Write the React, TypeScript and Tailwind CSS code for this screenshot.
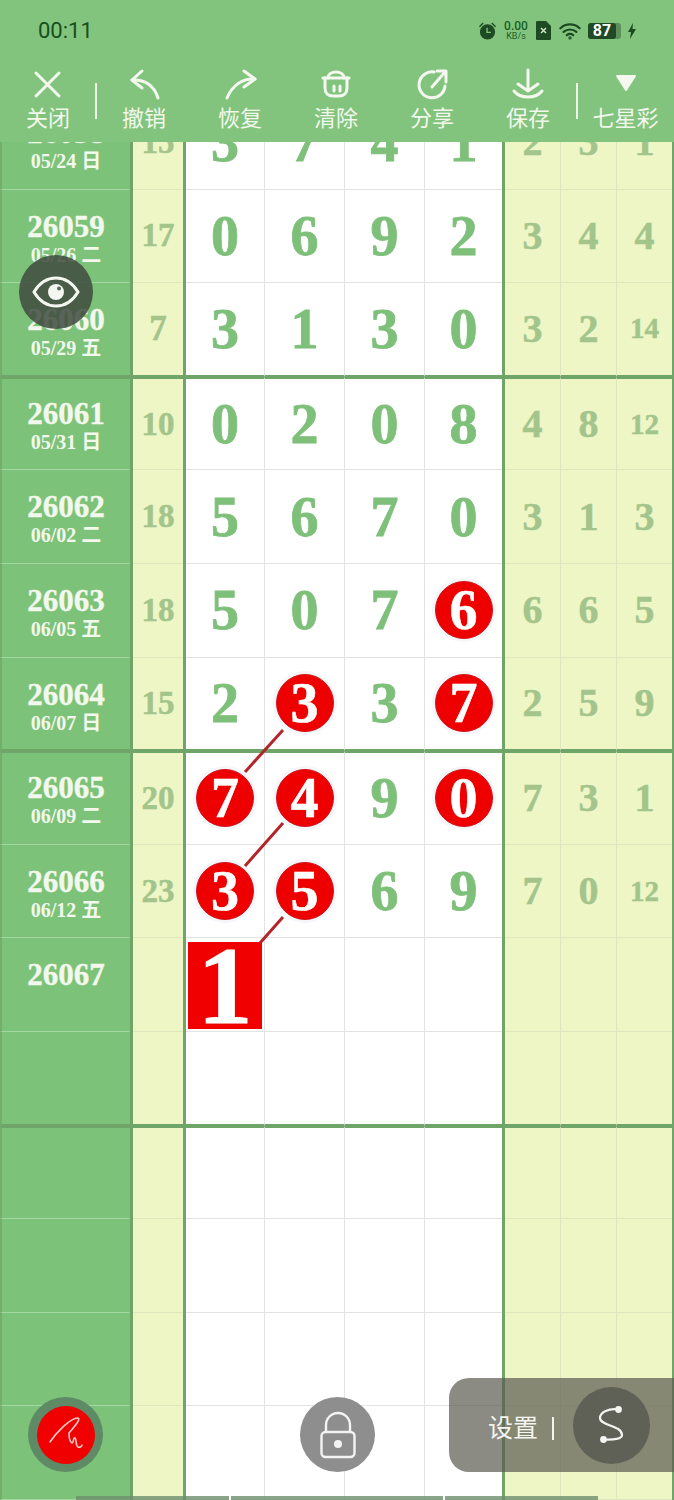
const FONT_SERIF = "font-['Liberation_Serif','Noto_Sans_CJK_SC',serif]";

type Row = {
  id?: string;
  date?: string;
  sum?: string;
  nums?: string[];
  hits?: number[];
  extra?: string[];
  thick?: boolean;
};

const rows: Row[] = [
  { id: '26058', date: '05/24 日', sum: '15', nums: ['3', '7', '4', '1'], extra: ['2', '3', '1'] },
  { id: '26059', date: '05/26 二', sum: '17', nums: ['0', '6', '9', '2'], extra: ['3', '4', '4'] },
  { id: '26060', date: '05/29 五', sum: '7', nums: ['3', '1', '3', '0'], extra: ['3', '2', '14'], thick: true },
  { id: '26061', date: '05/31 日', sum: '10', nums: ['0', '2', '0', '8'], extra: ['4', '8', '12'] },
  { id: '26062', date: '06/02 二', sum: '18', nums: ['5', '6', '7', '0'], extra: ['3', '1', '3'] },
  { id: '26063', date: '06/05 五', sum: '18', nums: ['5', '0', '7', '6'], hits: [3], extra: ['6', '6', '5'] },
  { id: '26064', date: '06/07 日', sum: '15', nums: ['2', '3', '3', '7'], hits: [1, 3], extra: ['2', '5', '9'], thick: true },
  { id: '26065', date: '06/09 二', sum: '20', nums: ['7', '4', '9', '0'], hits: [0, 1, 3], extra: ['7', '3', '1'] },
  { id: '26066', date: '06/12 五', sum: '23', nums: ['3', '5', '6', '9'], hits: [0, 1], extra: ['7', '0', '12'] },
  { id: '26067' },
  { thick: true },
  {},
  {},
  {},
  {},
];

const tools = [
  {
    label: '关闭',
    icon: <path d="M6 7l23 23M29 7L6 30" />,
  },
  {
    label: '撤销',
    icon: (
      <>
        <path d="M6 14L16 5M6 14l10 8" />
        <path d="M6 14c12-1 22 5 26 18" />
      </>
    ),
  },
  {
    label: '恢复',
    icon: (
      <>
        <path d="M33 13L22 5M33 13l-11 8" />
        <path d="M33 13C20 12 10 20 5 32" />
      </>
    ),
  },
  {
    label: '清除',
    icon: (
      <>
        <path d="M10 12c0-8 16-8 16 0" />
        <path d="M5 12h26" />
        <path d="M7 12v10c0 5 3 8 8 8h6c5 0 8-3 8-8V12" />
        <path d="M16 20v5M22 20v5" />
      </>
    ),
  },
  {
    label: '分享',
    icon: (
      <>
        <path d="M20 6A13 13 0 1 0 31 20" />
        <path d="M18 21L31 6M23 5h9v11" />
      </>
    ),
  },
  {
    label: '保存',
    icon: (
      <>
        <path d="M18 4v20M8 18l10 7 10-7" />
        <path d="M4 25c6 8 22 8 28 0" />
      </>
    ),
  },
];

function ToolIcon({ children }: { children: React.ReactNode }) {
  return (
    <svg viewBox="0 0 36 36" className="h-9 w-9" fill="none" stroke="#f4f8ef" strokeWidth={3} strokeLinecap="round" strokeLinejoin="round">
      {children}
    </svg>
  );
}

function StatusIcons() {
  return (
    <div className="flex items-center text-[#1b5f26]">
      <svg viewBox="0 0 20 20" className="h-[20px] w-[19px]" fill="#1d4a23">
        <circle cx="10" cy="11" r="8" />
        <path d="M1 5l4-4 1 1-4 4zM19 5l-4-4-1 1 4 4z" />
        <path d="M9.500 6.500v5h4" fill="none" stroke="#82c47d" strokeWidth="1.4" />
      </svg>
      <div className="ml-[7px] flex w-[24px] flex-col items-center font-['Roboto',sans-serif] leading-none">
        <span className="text-[12px] font-medium leading-[11px]">0.00</span>
        <span className="text-[9px] leading-[9px]">KB/s</span>
      </div>
      <svg viewBox="0 0 15 19" className="ml-[8px] h-[19px] w-[15px]">
        <path d="M1 0h9l5 5v13a1 1 0 0 1-1 1H1a1 1 0 0 1-1-1V1a1 1 0 0 1 1-1z" fill="#1d4a23" />
        <path d="M5 7l5 5M10 7l-5 5" stroke="#cfe3c8" strokeWidth="1.5" />
      </svg>
      <svg viewBox="0 0 24 18" className="ml-[8px] h-[18px] w-[22px]" fill="none" stroke="#1d4a23" strokeWidth="2.4" strokeLinecap="round">
        <path d="M1.500 6c6-5.500 15-5.500 21 0" />
        <path d="M5 10c4-3.500 10-3.500 14 0" />
        <path d="M8.500 13.500c2-1.500 5-1.500 7 0" />
        <circle cx="12" cy="16.500" r="0.6" fill="#1d4a23" />
      </svg>
      <div className="ml-[7px] flex h-[16px] w-[33px] items-center rounded-[3px] bg-[#5d8f5a] font-['Roboto',sans-serif]">
        <span className="flex h-full w-[28px] items-center justify-center rounded-[3px] bg-[#1f4a25] text-[16px] font-bold text-white">87</span>
      </div>
      <svg viewBox="0 0 8 16" className="ml-[7px] h-[16px] w-[8px]" fill="#1d4a23">
        <path d="M5 0L0 9h3l-1 7 6-10H4.500z" />
      </svg>
    </div>
  );
}

function Header() {
  return (
    <div className="absolute inset-x-0 top-0 z-10 h-[142px] bg-[#82c47d]">
      <div className="flex h-[60px] items-center justify-between pl-[38px] pr-[38px] pt-[1px]">
        <span className="font-['Roboto',sans-serif] text-[22px] text-[#15501d]">00:11</span>
        <StatusIcons />
      </div>
      <div className="flex">
        {tools.map((t, i) => (
          <div key={t.label} className="relative flex w-[96px] flex-col items-center">
            <div className="mt-[6px] h-9">
              <ToolIcon>{t.icon}</ToolIcon>
            </div>
            <span className="mt-[-1px] font-['Noto_Sans_CJK_SC',sans-serif] text-[22px] leading-[30px] text-[#f2f7ec]">{t.label}</span>
            {i === 0 && <div className="absolute right-[-1px] top-[23px] h-[36px] w-[2px] bg-[#eef5e6]" />}
            {i === 5 && <div className="absolute right-[-2px] top-[23px] h-[36px] w-[2px] bg-[#eef5e6]" />}
          </div>
        ))}
        <div className="flex w-[98px] flex-col items-center pl-[1px]">
          <div className="mt-[6px] h-9">
            <svg viewBox="0 0 36 36" className="h-9 w-9" fill="#f4f8ef" stroke="#f4f8ef" strokeWidth={2} strokeLinejoin="round">
              <path d="M9 10h18l-9 14z" />
            </svg>
          </div>
          <span className="mt-[-1px] font-['Noto_Sans_CJK_SC',sans-serif] text-[22px] leading-[30px] text-[#f2f7ec]">七星彩</span>
        </div>
      </div>
    </div>
  );
}

function Ball({ value }: { value: string }) {
  return (
    <div className="flex h-[64px] w-[64px] shrink-0 items-center justify-center rounded-full bg-[#f5f6f9]">
      <div className={`flex h-[58px] w-[58px] items-center justify-center rounded-full border border-[#d0141a] bg-[#ee0000] text-[56px] font-bold leading-none text-white [-webkit-text-stroke:0.6px] ${FONT_SERIF}`}>
        {value}
      </div>
    </div>
  );
}

function TableRow({ row, index }: { row: Row; index: number }) {
  const thickTop = rows[index - 1]?.thick;
  const top = thickTop ? 'border-t-2 border-t-[#6fa568]' : '';
  const edge = row.thick ? 'border-b-2 border-b-[#6fa568]' : 'border-b border-b-[#e2e4e2]';
  const yellowEdge = row.thick ? 'border-b-2 border-b-[#6fa568]' : 'border-b border-b-[#dde6bd]';
  const leftEdge = row.thick ? 'border-b-2 border-b-[#6fa568]' : 'border-b border-b-[#a4d79f]';
  return (
    <div className={`grid h-[93.6px] grid-cols-[130px_3px_50px_3px_79px_80px_80px_77px_3px_56px_56px_55px_2px] ${FONT_SERIF}`}>
      <div className={`flex flex-col items-center border-l-2 border-l-[#72ae6c] bg-[#7dc279] text-[#f3f8ec] ${thickTop ? 'pt-[13px]' : 'pt-[15px]'} ${top} ${leftEdge}`}>
        {row.id && <span className="text-[31px] font-bold leading-[44px] [-webkit-text-stroke:0.4px]">{row.id}</span>}
        {row.date && <span className="mt-[-6px] text-[20px] font-bold leading-[24px]">{row.date}</span>}
      </div>
      <div className="bg-[#6fa568]" />
      <div className={`flex items-center justify-center bg-[#eef6c6] font-bold leading-none text-[#a3c58c] [-webkit-text-stroke:0.5px] ${top} ${yellowEdge}`}>
        <span className={row.sum && row.sum.length > 1 ? 'text-[33px]' : 'text-[35px]'}>{row.sum}</span>
      </div>
      <div className="bg-[#6fa568]" />
      {[0, 1, 2, 3].map((c) => (
        <div key={c} className={`flex items-center justify-center bg-white text-[56px] font-bold leading-none text-[#7ec07a] [-webkit-text-stroke:0.8px] ${top} ${edge} ${c < 3 ? 'border-r border-r-[#e2e4e2]' : ''}`}>
          {row.nums && (row.hits?.includes(c) ? <Ball value={row.nums[c]} /> : row.nums[c])}
          {index === 9 && c === 0 && (
            <div className="mt-[1px] flex h-[87px] w-[74px] items-center justify-center bg-[#f00000] text-[111px] font-bold leading-none text-white">1</div>
          )}
        </div>
      ))}
      <div className="bg-[#6fa568]" />
      {[0, 1, 2].map((c) => (
        <div key={c} className={`flex items-center justify-center bg-[#eef6c6] font-bold leading-none text-[#a3c58c] [-webkit-text-stroke:0.5px] ${top} ${yellowEdge} ${c < 2 ? 'border-r border-r-[#dde6bd]' : ''} ${row.extra && row.extra[c].length > 1 ? 'text-[29px]' : 'text-[40px]'}`}>
          {row.extra?.[c]}
        </div>
      ))}
      <div className="bg-[#6fa568]" />
    </div>
  );
}

export default function App() {
  return (
    <div className="relative h-[1500px] w-[674px] overflow-hidden bg-white">
      <Header />
      <div className="pt-[96px]">
        {rows.map((row, i) => (
          <TableRow key={i} row={row} index={i} />
        ))}
      </div>

      {/* trend lines between hit numbers */}
      <svg className="pointer-events-none absolute left-0 top-0 h-[1500px] w-[674px]" viewBox="0 0 674 1500" fill="none" stroke="#b3252b" strokeWidth={3}>
        <path d="M283 730L245 772M283 823L245 866M283 917L260 943" />
      </svg>

      {/* eye toggle */}
      <div className="absolute left-[19px] top-[255px] flex h-[74px] w-[74px] items-center justify-center rounded-full bg-[#3e4a40]/85">
        <svg viewBox="0 0 48 32" className="h-[32px] w-[48px]" fill="none" stroke="#f4f6f0" strokeWidth={3}>
          <path d="M2 16C8 6 16 2 24 2s16 4 22 14c-6 10-14 14-22 14S8 26 2 16z" />
          <circle cx="24" cy="16" r="8" fill="#f4f6f0" stroke="none" />
          <circle cx="27" cy="12.500" r="2" fill="#56665a" stroke="none" />
        </svg>
      </div>

      {/* pen */}
      <div className="absolute left-[28px] top-[1397px] flex h-[75px] w-[75px] items-center justify-center rounded-full bg-[#5e8a66]">
        <div className="flex h-[58px] w-[58px] items-center justify-center rounded-full bg-[#f00000]">
          <svg viewBox="0 0 40 40" className="h-[40px] w-[40px]" fill="none" stroke="#f7c9c4" strokeWidth={1.6} strokeLinecap="round" strokeLinejoin="round">
            <path d="M4 27C10 18 24 3 32 3c3 1-3 8-9 15 0 4 1 9 3 10 2 0 1-6 3-5 2 1 0 7 3 9 2 1 4-1 4-2" />
          </svg>
        </div>
      </div>

      {/* lock */}
      <div className="absolute left-[300px] top-[1397px] flex h-[75px] w-[75px] items-center justify-center rounded-full bg-[#8e8e8e]">
        <svg viewBox="0 0 36 48" className="h-[48px] w-[36px]" fill="none" stroke="#f4f4f4" strokeWidth={2.4}>
          <path d="M6 21v-7a12 12 0 0 1 24 0v7" />
          <rect x="1.500" y="21" width="33" height="25" rx="4" />
          <circle cx="18" cy="33" r="4" fill="#f4f4f4" stroke="none" />
        </svg>
      </div>

      {/* settings pill */}
      <div className="absolute left-[449px] top-[1378px] flex h-[94px] w-[225px] items-center rounded-l-[20px] bg-[#5a5a50]/70 pl-[39px]">
        <span className="mt-[3px] font-['Noto_Sans_CJK_SC',sans-serif] text-[25px] text-[#f4f4f0]">设置</span>
        <div className="ml-[14px] mt-[6px] h-[23px] w-[2px] bg-[#f4f4f0]" />
        <div className="ml-[19px] flex h-[77px] w-[77px] items-center justify-center rounded-full bg-[#5f6156]">
          <svg viewBox="0 0 30 40" className="h-[40px] w-[30px]" fill="none" stroke="#f4f4f0" strokeWidth={2.2}>
            <path d="M21.500 4.500C12 3 3 7 3 13c0 8 22 7 22 17 0 4-8 5-18.500 4.500" />
            <circle cx="21.500" cy="4.500" r="3.400" fill="#f4f4f0" stroke="none" />
            <circle cx="6.500" cy="34.500" r="3.400" fill="#f4f4f0" stroke="none" />
          </svg>
        </div>
      </div>

      {/* scrollbar sliver */}
      <div className="absolute bottom-0 left-[76px] flex h-[4px] w-[522px] bg-[#6d8f6d]/80">
        <div className="ml-[153px] h-full w-[2px] bg-white" />
        <div className="ml-[212px] h-full w-[2px] bg-white" />
      </div>
    </div>
  );
}
